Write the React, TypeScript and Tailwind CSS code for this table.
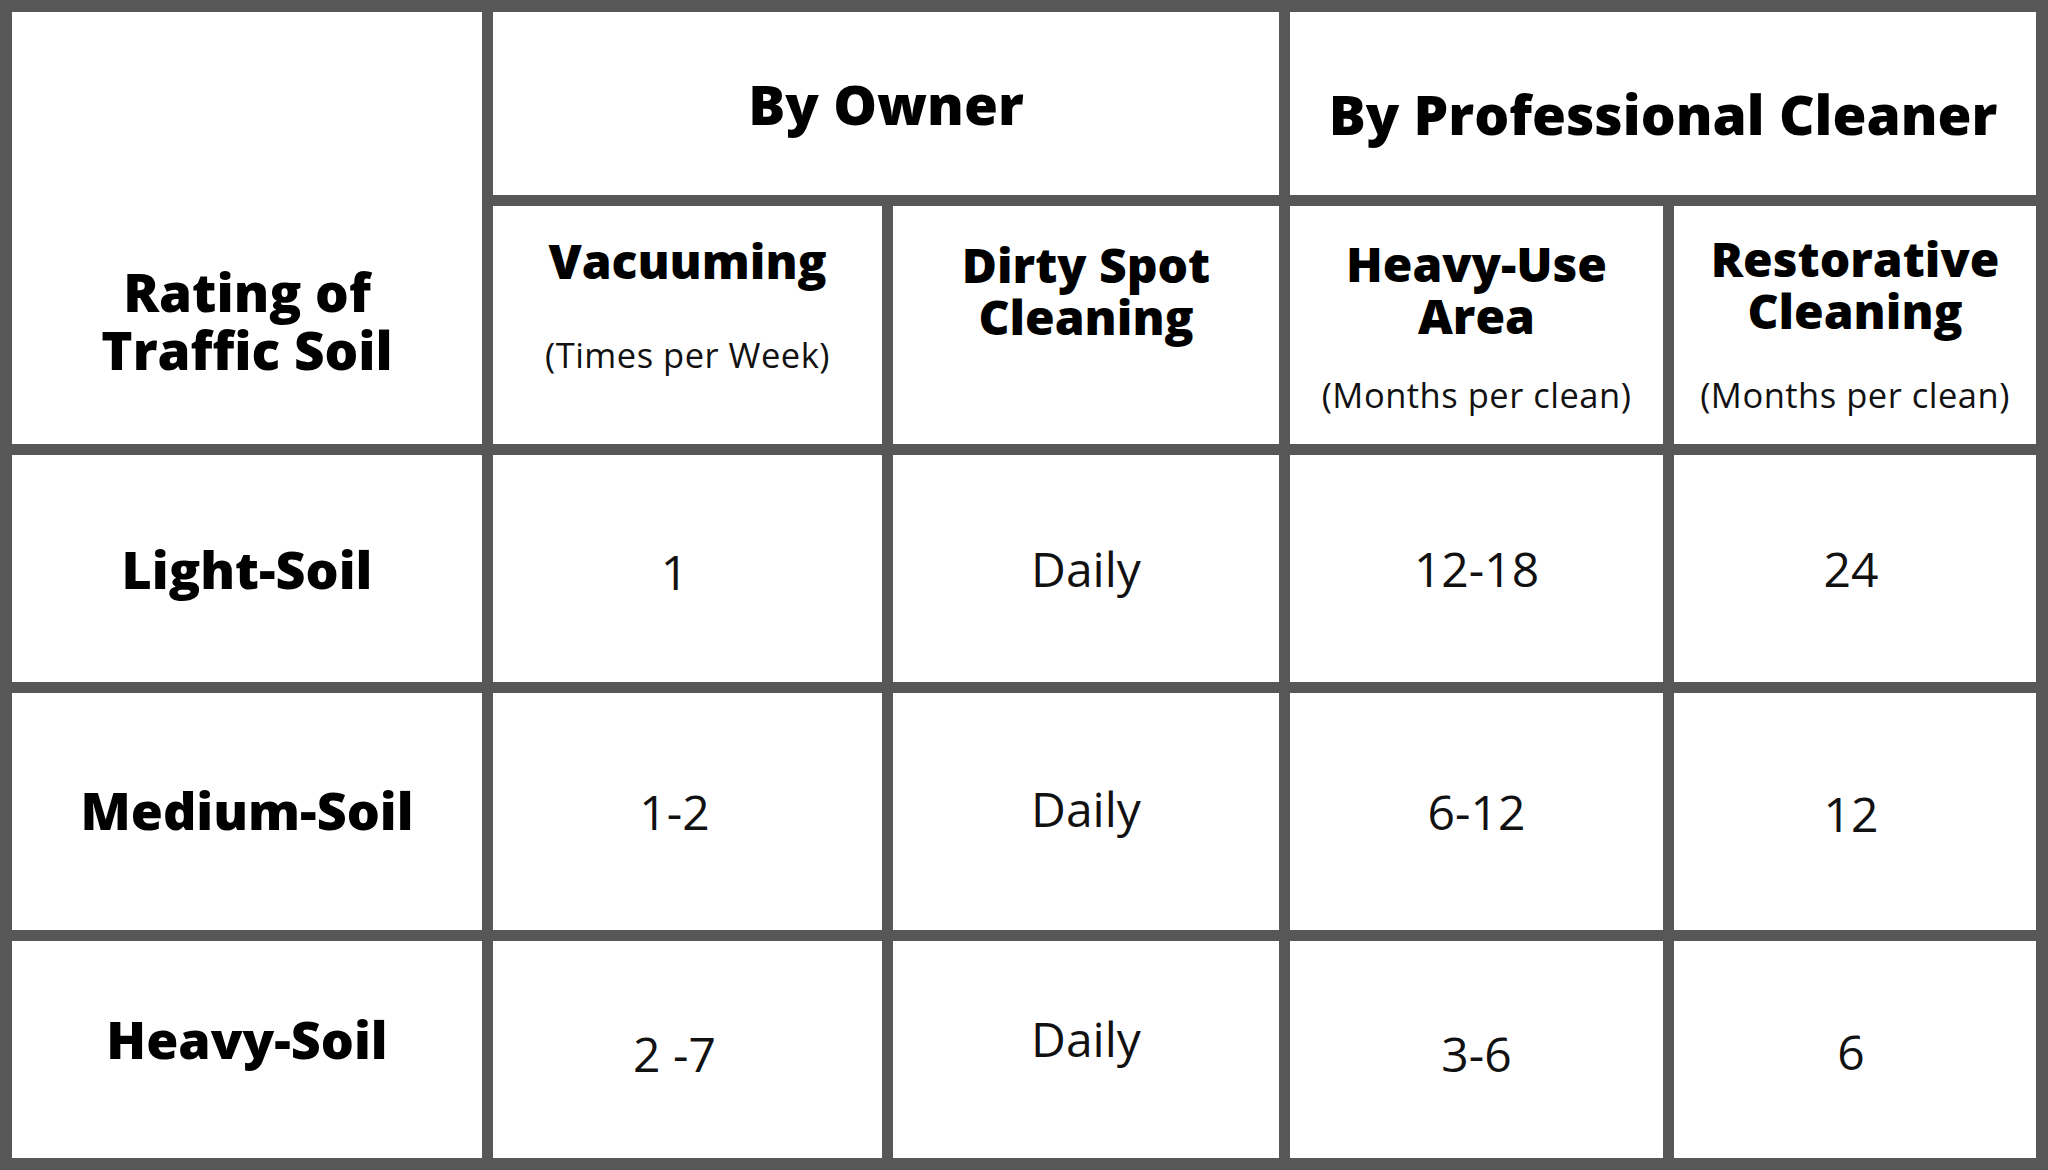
type Row = {
  label: string;
  labelClass: string;
  vacuum: string;
  vacuumClass: string;
  spot: string;
  spotClass: string;
  heavy: string;
  heavyClass: string;
  restore: string;
  restoreClass: string;
};

const rows: Row[] = [
  {
    label: "Light-Soil",
    labelClass: "",
    vacuum: "1",
    vacuumClass: "pt-[6px]",
    spot: "Daily",
    spotClass: "",
    heavy: "12-18",
    heavyClass: "",
    restore: "24",
    restoreClass: "",
  },
  {
    label: "Medium-Soil",
    labelClass: "pb-[4px]",
    vacuum: "1-2",
    vacuumClass: "",
    spot: "Daily",
    spotClass: "pb-[6px]",
    heavy: "6-12",
    heavyClass: "",
    restore: "12",
    restoreClass: "pt-[4px]",
  },
  {
    label: "Heavy-Soil",
    labelClass: "pb-[22px]",
    vacuum: "2 -7",
    vacuumClass: "pt-[8px]",
    spot: "Daily",
    spotClass: "pb-[22px]",
    heavy: "3-6",
    heavyClass: "pt-[8px]",
    restore: "6",
    restoreClass: "pt-[4px]",
  },
];

function ValueCell({ value, className }: { value: string; className: string }) {
  return (
    <div className={`flex items-center justify-center bg-white text-[48px] leading-none text-[#111] ${className}`}>
      {value}
    </div>
  );
}

export default function App() {
  return (
    <div className="grid h-[1170px] w-[2048px] grid-cols-[470px_389px_386px_373px_362px] grid-rows-[183px_238px_227px_237px_217px] gap-[11px] bg-[#575757] p-[12px] font-['Open_Sans',sans-serif] text-black">
      {/* corner header */}
      <div className="row-span-2 flex flex-col items-center bg-white pt-[251px] text-center text-[53px] font-extrabold leading-[58px]">
        <span>Rating of</span>
        <span>Traffic Soil</span>
      </div>

      {/* group headers */}
      <div className="col-span-2 flex items-center justify-center bg-white text-[55px] font-extrabold leading-none">
        By Owner
      </div>
      <div className="col-span-2 flex items-center justify-center bg-white pt-[20px] text-[55px] font-extrabold leading-none">
        By Professional Cleaner
      </div>

      {/* sub headers */}
      <div className="flex flex-col items-center bg-white pt-[29px] text-center">
        <span className="text-[48px] font-extrabold leading-[52px]">Vacuuming</span>
        <span className="mt-[48px] text-[34.5px] leading-[40px] tracking-[0.5px] text-[#111]">(Times per Week)</span>
      </div>
      <div className="flex flex-col items-center bg-white pt-[33px] text-center text-[48px] font-extrabold leading-[52px]">
        <span>Dirty Spot</span>
        <span>Cleaning</span>
      </div>
      <div className="flex flex-col items-center bg-white pt-[32px] text-center">
        <span className="text-[48px] font-extrabold leading-[52px]">Heavy-Use</span>
        <span className="text-[48px] font-extrabold leading-[52px]">Area</span>
        <span className="mt-[33px] text-[34.5px] leading-[40px] tracking-[0.5px] text-[#111]">(Months per clean)</span>
      </div>
      <div className="flex flex-col items-center bg-white pt-[27px] text-center">
        <span className="text-[48px] font-extrabold leading-[52px]">Restorative</span>
        <span className="text-[48px] font-extrabold leading-[52px]">Cleaning</span>
        <span className="mt-[38px] text-[34.5px] leading-[40px] tracking-[0.5px] text-[#111]">(Months per clean)</span>
      </div>

      {/* body rows */}
      {rows.map((row) => (
        <div key={row.label} className="contents">
          <div className={`flex items-center justify-center bg-white text-[52px] font-extrabold leading-none ${row.labelClass}`}>
            {row.label}
          </div>
          <ValueCell value={row.vacuum} className={`pr-[26px] ${row.vacuumClass}`} />
          <ValueCell value={row.spot} className={row.spotClass} />
          <ValueCell value={row.heavy} className={row.heavyClass} />
          <ValueCell value={row.restore} className={`pr-[8px] ${row.restoreClass}`} />
        </div>
      ))}
    </div>
  );
}
